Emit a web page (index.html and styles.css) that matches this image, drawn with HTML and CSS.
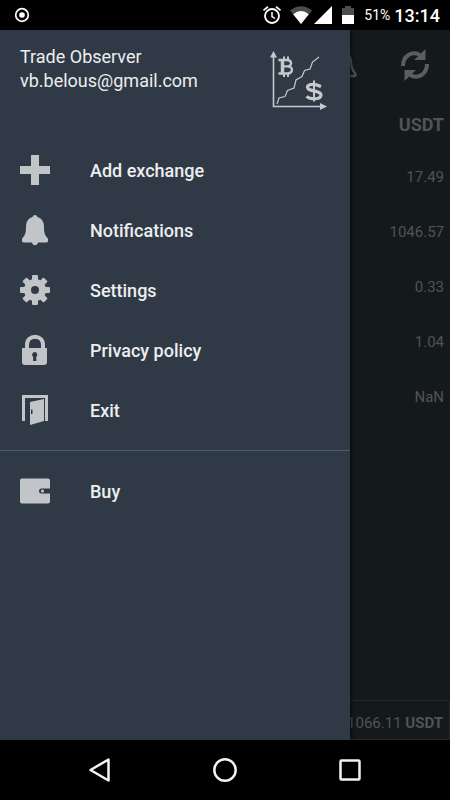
FILE: index.html
```html
<!DOCTYPE html>
<html lang="en">
<head>
<meta charset="utf-8">
<meta name="viewport" content="width=device-width, initial-scale=1">
<title>Trade Observer</title>
<link rel="stylesheet" href="styles.css">
</head>
<body>
<header class="status">
  <svg class="status-record" width="16" height="16" viewBox="0 0 16 16" aria-hidden="true"><circle cx="8" cy="8" r="6.3" fill="none" stroke="#fff" stroke-width="1.7"/><circle cx="8" cy="8" r="2.8" fill="#fff"/></svg>
  <svg class="status-alarm" width="20" height="20" viewBox="0 0 20 20" fill="none" stroke="#fff" aria-hidden="true"><circle cx="10" cy="11" r="7" stroke-width="1.8"/><path d="M10 7v4.5l3 2" stroke-width="1.5"/><path d="M1.5 5.4 6 1.7M18.500 5.400 14 1.700" stroke-width="1.800"/></svg>
  <svg class="status-wifi" width="22" height="18" viewBox="0 0 22 18" aria-hidden="true"><path d="M0 4.500Q11-4 22 4.500L11 18Z" fill="#4d4d4d"/><path d="M3.200 8.300Q11 1.900 18.800 8.300L11 18Z" fill="#fff"/></svg>
  <svg class="status-signal" width="18" height="18" viewBox="0 0 18 18" aria-hidden="true"><path d="M18 0v18H0z" fill="#fff"/></svg>
  <svg class="status-battery" width="12" height="18" viewBox="0 0 12 18" aria-hidden="true"><path d="M3 0h6v2h3v7H0V2h3z" fill="#4d4d4d"/><path d="M0 9h12v9H0z" fill="#fff"/></svg>
  <span class="percent">51%</span>
  <time class="clock">13:14</time>
</header>

<div class="screen">
  <main class="page">
    <div class="toolbar">
      <button class="tool" aria-label="Alerts"><svg width="30" height="32" viewBox="0 0 30 32" fill="none" stroke="#515354" stroke-width="2.400" aria-hidden="true"><path d="M15 4C9 4 7 8 7 13C7 19 5 22 2.500 25Q2 27 4 27H26Q28 27 27.500 25C25 22 23 19 23 13C23 8 21 4 15 4Z"/></svg></button>
      <button class="tool" aria-label="Refresh"><svg width="30" height="32" viewBox="0 0 30 32" aria-hidden="true"><g fill="none" stroke="#5b5d5e" stroke-width="4"><path d="M3 17C3 7 12 1.500 20 6"/><path d="M27 15C27 25 18 30.500 10 26"/></g><path d="M14 11 25.500 0V11ZM16 21 4.500 32V21Z" fill="#5b5d5e"/></svg></button>
    </div>
    <table class="values">
      <thead><tr><th scope="col">USDT</th></tr></thead>
      <tbody>
        <tr><td>17.49</td></tr>
        <tr><td>1046.57</td></tr>
        <tr><td>0.33</td></tr>
        <tr><td>1.04</td></tr>
        <tr><td>NaN</td></tr>
      </tbody>
    </table>
    <p class="total">1066.11 <b>USDT</b></p>
  </main>

  <aside class="drawer">
    <div class="account">
      <p class="account-text">Trade Observer<br>vb.belous@gmail.com</p>
      <svg width="60" height="60" viewBox="0 0 60 60" aria-hidden="true">
        <path d="M5.500 7V57.500H53" fill="none" stroke="#c6c9cc" stroke-width="1.600"/>
        <path d="M2 8.500 5.500 2 9 8.500ZM52 54 59 57.500 52 61Z" fill="#c6c9cc"/>
        <path d="M9 55 11 49 17 47.500 19.500 41.500 26 39 28 31 34 27.500 36.500 21.500 42 20 44.500 13 51 8" fill="none" stroke="#c6c9cc" stroke-width="1.200"/>
        <path d="M10.500 11H18.500C24.500 11 24.500 17.300 19 17.300H15H19.500C25.500 17.300 25.500 24.500 19 24.500H10.500" fill="none" stroke="#c6c9cc" stroke-width="2.300"/>
        <path d="M14.500 11V24.500" fill="none" stroke="#c6c9cc" stroke-width="3.500"/>
        <path d="M16 7.500V11M20 7.500V11M16 24.500V28M20 24.500V28" fill="none" stroke="#c6c9cc" stroke-width="2"/>
        <path d="M53 37.500Q47.500 35 43 35.500Q38 36.500 40 39.500C42 42.500 53 41.500 53 46C53 50.500 43 51 38.500 47.500" fill="none" stroke="#c6c9cc" stroke-width="3.200"/>
        <path d="M46 31.500V52.500" fill="none" stroke="#c6c9cc" stroke-width="2"/>
      </svg>
    </div>
    <nav class="menu">
      <a class="item" href="#add"><svg class="icon" viewBox="0 0 30 30" aria-hidden="true"><path d="M11 0h8v11h11v8H19v11h-8V19H0v-8h11z"/></svg>Add exchange</a>
      <a class="item" href="#notifications"><svg class="icon" viewBox="0 0 30 30" aria-hidden="true"><path d="M15 0C16.500 0 17 1 17.500 2C22.500 3.500 24 7.500 24 12C24 18 25 20.500 28 23.500V26.500Q27.500 27.500 26 27.500H18C17.500 31 12.500 31 12 27.500H4Q2.500 27.500 2 26.500V23.500C5 20.500 6 18 6 12C6 7.500 7.500 3.500 12.500 2C13 1 13.500 0 15 0Z"/></svg>Notifications</a>
      <a class="item" href="#settings"><svg class="icon" viewBox="0 0 30 30" aria-hidden="true"><circle cx="15" cy="15" r="7.500" fill="none" stroke="#c1c5c8" stroke-width="7"/><g id="teeth"><path d="M12 5V1Q12 0 13 0H17Q18 0 18 1V5ZM12 25V29Q12 30 13 30H17Q18 30 18 29V25ZM5 12H1Q0 12 0 13V17Q0 18 1 18H5ZM25 12H29Q30 12 30 13V17Q30 18 29 18H25Z"/></g><use href="#teeth" transform="rotate(45 15 15)"/></svg>Settings</a>
      <a class="item" href="#privacy"><svg class="icon" viewBox="0 0 30 30" aria-hidden="true"><path d="M7 14V10C7-1 23-1 23 10V14" fill="none" stroke="#c1c5c8" stroke-width="4"/><path fill-rule="evenodd" d="M2 13H27V27Q27 30 24 30H5Q2 30 2 27ZM14.700 17A2.800 2.800 0 0 0 13.200 22L13 26H16.400L16.200 22A2.800 2.800 0 0 0 14.700 17Z"/></svg>Privacy policy</a>
      <a class="item" href="#exit"><svg class="icon" viewBox="0 0 30 30" aria-hidden="true"><path d="M2 0H28V26H25V3H5V26H2Z"/><path fill-rule="evenodd" d="M10 7 24 4V26L10 30ZM11 14.500V19H12.500V14.500Z"/></svg>Exit</a>
      <hr class="rule">
      <a class="item" href="#buy"><svg class="icon" viewBox="0 0 30 30" aria-hidden="true"><path d="M2 2.500H28Q30 2.500 30 4.500V12.500H21.500A2.500 2.500 0 0 0 21.500 17.500H30V25.500Q30 27.500 28 27.500H2Q0 27.500 0 25.500V4.500Q0 2.500 2 2.500Z"/><circle cx="22.500" cy="15" r="1.600"/></svg>Buy</a>
    </nav>
  </aside>
</div>

<footer class="system">
  <button class="key" aria-label="Back"><svg width="24" height="26" viewBox="0 0 24 26" aria-hidden="true"><path d="M20.500 2.500V23.500L2.500 13Z"/></svg></button>
  <button class="key" aria-label="Home"><svg width="24" height="26" viewBox="0 0 24 26" aria-hidden="true"><circle cx="12" cy="13" r="10.700"/></svg></button>
  <button class="key" aria-label="Recent apps"><svg width="24" height="26" viewBox="0 0 24 26" aria-hidden="true"><rect x="2.500" y="3.500" width="19" height="19" rx="1"/></svg></button>
</footer>
</body>
</html>
```
FILE: styles.css
```css
* {
  box-sizing: border-box;
}

body {
  margin: 0;
  min-height: 100vh;
  display: grid;
  grid-template-rows: 30px 1fr 60px;
  background: #000;
  font-family: Roboto, "Liberation Sans", sans-serif;
}

p {
  margin: 0;
}

svg {
  display: block;
  flex: none;
  overflow: visible;
}

button {
  border: 0;
  padding: 0;
  background: none;
}

.status {
  display: flex;
  align-items: center;
  padding: 0 10px 0 14px;
  color: #fff;
}

.status-record {
  margin-right: auto;
}

.status-alarm {
  margin-right: 8px;
}

.status-wifi {
  margin-right: 2px;
}

.status-signal {
  margin-right: 10px;
}

.status-battery {
  margin-right: 10px;
}

.percent {
  margin-right: 4px;
  font-size: 14px;
}

.clock {
  font-size: 18px;
  font-weight: 500;
}

.screen {
  position: relative;
  display: grid;
}

.page {
  display: flex;
  flex-direction: column;
  background: #14191c;
  color: #515354;
}

.toolbar {
  display: flex;
  justify-content: flex-end;
  align-items: center;
  gap: 42px;
  height: 70px;
  padding-right: 20px;
}

.values {
  width: 100%;
  border-collapse: collapse;
  text-align: right;
}

.values th {
  height: 49px;
  padding: 0 6px;
  font-size: 18px;
  font-weight: 700;
  text-align: right;
}

.values td {
  height: 55px;
  padding: 0 6px;
  font-size: 15px;
}

.total {
  height: 40px;
  margin-top: auto;
  padding-right: 6px;
  border: 1px solid #252829;
  font-size: 15px;
  line-height: 44px;
  text-align: right;
}

.drawer {
  position: absolute;
  inset: 0 100px 0 0;
  background: #303a46;
  box-shadow: 1px 0 5px #000a;
  color: #eceeef;
}

.account {
  display: flex;
  justify-content: space-between;
  height: 110px;
  padding: 15px 22px 0 20px;
}

.account svg {
  margin-top: 4px;
}

.account-text {
  font-size: 18px;
  line-height: 24px;
}

.item {
  display: flex;
  align-items: center;
  gap: 40px;
  height: 60px;
  padding: 0 20px;
  color: inherit;
  font-size: 18px;
  font-weight: 500;
  text-decoration: none;
}

.icon {
  width: 30px;
  height: 30px;
  fill: #c1c5c8;
}

.rule {
  height: 1px;
  margin: 10px 0;
  border: 0;
  background: #4c5d67;
}

.system {
  display: flex;
  justify-content: center;
  align-items: center;
  gap: 101px;
}

.key svg {
  fill: none;
  stroke: #f2f2f2;
  stroke-width: 2.5;
  stroke-linejoin: round;
}
```
